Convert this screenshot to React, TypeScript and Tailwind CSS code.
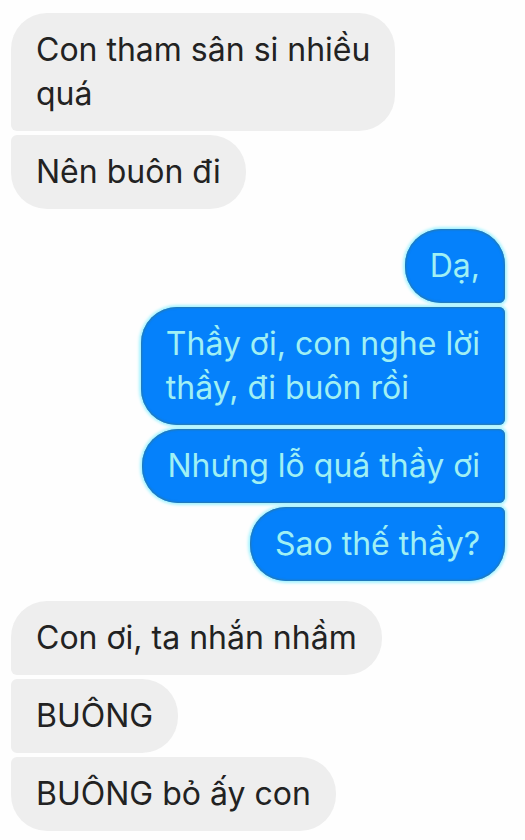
import clsx from "clsx";

type Group = { from: "them" | "me"; messages: string[] };

const GROUPS: Group[] = [
  { from: "them", messages: ["Con tham sân si nhiều\nquá", "Nên buôn đi"] },
  {
    from: "me",
    messages: [
      "Dạ,",
      "Thầy ơi, con nghe lời\nthầy, đi buôn rồi",
      "Nhưng lỗ quá thầy ơi",
      "Sao thế thầy?",
    ],
  },
  { from: "them", messages: ["Con ơi, ta nhắn nhầm", "BUÔNG", "BUÔNG bỏ ấy con"] },
];

function Bubble({
  text,
  mine,
  first,
  last,
}: {
  text: string;
  mine: boolean;
  first: boolean;
  last: boolean;
}) {
  return (
    <li
      className={clsx(
        "whitespace-pre-line px-[25px] py-[15px] text-[32px] leading-[44px]",
        mine
          ? "rounded-l-[36px] bg-[#0581fb] text-[#a0f0f4] shadow-[inset_0_0_2px_1px_#2a78a8,0_0_3px_2px_#a4f3ff]"
          : "rounded-r-[36px] bg-[#eeeeee] text-[#222222]",
        // corners on the sender's side are tight inside a group
        mine && (first ? "rounded-tr-[36px]" : "rounded-tr-md"),
        mine && (last ? "rounded-br-[36px]" : "rounded-br-md"),
        !mine && (first ? "rounded-tl-[36px]" : "rounded-tl-md"),
        !mine && (last ? "rounded-bl-[36px]" : "rounded-bl-md")
      )}
    >
      {text}
    </li>
  );
}

export default function App() {
  return (
    <main className="min-h-screen bg-[#fefefe] pt-[13px] pr-5 pb-2 pl-[11px] font-['Inter','Liberation_Sans',sans-serif]">
      <div className="flex flex-col gap-5">
        {GROUPS.map((group, g) => (
          <ul
            key={g}
            className={clsx(
              "flex flex-col gap-1",
              group.from === "me" ? "items-end" : "items-start"
            )}
          >
            {group.messages.map((text, i) => (
              <Bubble
                key={i}
                text={text}
                mine={group.from === "me"}
                first={i === 0}
                last={i === group.messages.length - 1}
              />
            ))}
          </ul>
        ))}
      </div>
    </main>
  );
}
